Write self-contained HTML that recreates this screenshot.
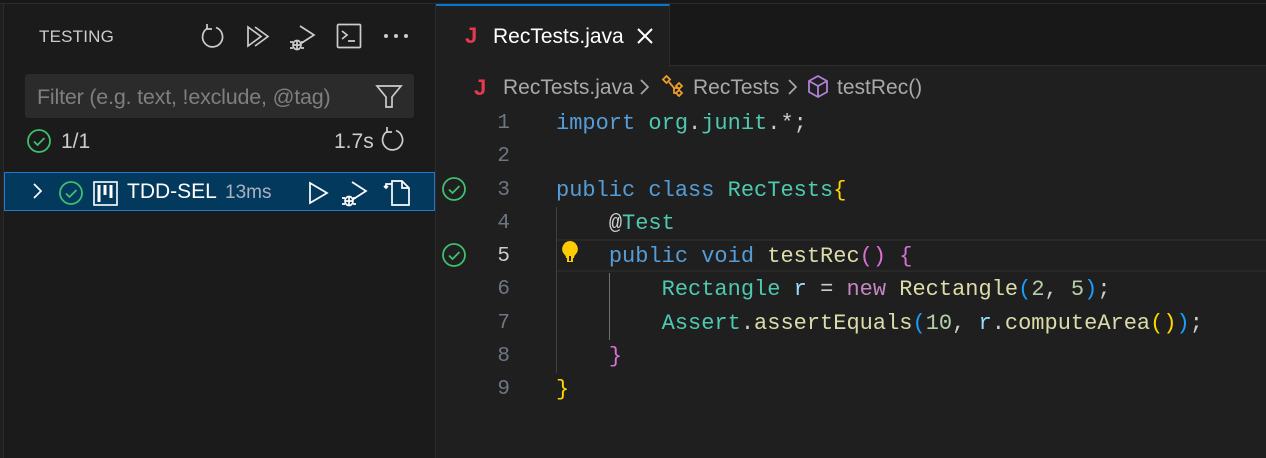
<!DOCTYPE html>
<html><head><meta charset="utf-8"><style>
*{margin:0;padding:0;box-sizing:border-box}
body{width:1266px;height:458px;background:#1f1f1f;position:relative;overflow:hidden;font-family:"Liberation Sans",sans-serif;color:#ccc}
.abs{position:absolute}
#side{left:3px;top:4px;width:433px;height:454px;background:#1b1b1b;border-left:1px solid #2b2b2b;border-right:1px solid #2b2b2b}
#topline{left:0;top:0;width:1266px;height:4px;background:#181818;border-bottom:1px solid #2b2b2b}
.ic{position:absolute;stroke:#ccc;fill:none;stroke-width:1.7}
.code{font-family:"Liberation Mono",monospace;font-size:22px;white-space:pre;position:absolute;left:556px;height:33px;line-height:33px}
.ln{font-family:"Liberation Mono",monospace;font-size:21px;color:#6e7681;position:absolute;left:478px;width:32px;text-align:right;line-height:33px}
.k{color:#569cd6}.t{color:#4ec9b0}.f{color:#dcdcaa}.v{color:#9cdcfe}.n{color:#b5cea8}.g{color:#ffd700}.m{color:#da70d6}.b{color:#179fff}.p{color:#c586c0}.w{color:#ccc}
</style></head><body>
<div class="abs" id="topline"></div>
<div class="abs" id="side"></div>
<div class="abs" style="left:39px;top:27px;font-size:17px;color:#ccc;letter-spacing:0.2px">TESTING</div>
<svg class="ic" style="left:199px;top:23px" width="28" height="28" viewBox="0 0 28 28"><path d="M9 5 A10 10 0 1 0 17 4.5"/><path d="M8 1v5h5"/></svg>
<svg class="ic" style="left:246px;top:24px" width="26" height="26" viewBox="0 0 26 26"><path d="M2 3v19l13-9.5z"/><path d="M9 3l13 9.5L9 22"/></svg>
<svg class="ic" style="left:288px;top:22px" width="30" height="30" viewBox="0 0 30 30"><path d="M12 4l14 9-14 9"/><ellipse cx="9" cy="23" rx="4" ry="4.5"/><path d="M2 20h3M13 20h3M2 26h3M13 26h3M5 23h8M9 19v8"/></svg>
<svg class="ic" style="left:336px;top:23px" width="26" height="26" viewBox="0 0 26 26"><rect x="1.5" y="1.5" width="23" height="23" rx="1"/><path d="M6 8l5 4-5 4M12 18h7"/></svg>
<svg class="abs" style="left:383px;top:32px" width="26" height="8" viewBox="0 0 26 8"><circle cx="3" cy="4" r="2" fill="#ccc"/><circle cx="13" cy="4" r="2" fill="#ccc"/><circle cx="23" cy="4" r="2" fill="#ccc"/></svg>
<div class="abs" style="left:25px;top:74px;width:389px;height:44px;background:#2b2b2b;border-radius:3px"></div>
<div class="abs" style="left:37px;top:85px;font-size:21.5px;color:#7f7f7f;letter-spacing:-0.2px">Filter (e.g. text, !exclude, @tag)</div>
<svg class="ic" style="left:375px;top:84px" width="28" height="26" viewBox="0 0 28 26"><path d="M2 2h24l-9 11v10h-6V13z"/></svg>
<svg class="abs" style="left:26px;top:128px" width="26" height="26" viewBox="0 0 26 26"><circle cx="13" cy="13" r="11" fill="none" stroke="#3fbf6f" stroke-width="1.8"/><path d="M8 13.5l3.5 3.5 7-7" fill="none" stroke="#3fbf6f" stroke-width="1.8"/></svg>
<div class="abs" style="left:61px;top:130px;font-size:21px;color:#ccc">1/1</div>
<div class="abs" style="left:334px;top:130px;font-size:21px;color:#ccc">1.7s</div>
<svg class="ic" style="left:379px;top:126px" width="28" height="28" viewBox="0 0 28 28"><path d="M9 5 A10 10 0 1 0 17 4.5"/><path d="M8 1v5h5"/></svg>
<div class="abs" style="left:4px;top:172px;width:431px;height:39px;background:#04395e;border:1px solid #2479cc"></div>
<svg class="ic" style="left:30px;top:181px;stroke:#fff" width="16" height="20" viewBox="0 0 16 20"><path d="M4 3l7 7-7 7"/></svg>
<svg class="abs" style="left:58px;top:180px" width="26" height="26" viewBox="0 0 26 26"><circle cx="13" cy="13" r="11" fill="none" stroke="#3fbf6f" stroke-width="1.8"/><path d="M8 13.5l3.5 3.5 7-7" fill="none" stroke="#3fbf6f" stroke-width="1.8"/></svg>
<svg class="abs" style="left:93px;top:181px" width="25" height="25" viewBox="0 0 25 25"><rect x="1" y="1" width="23" height="23" fill="none" stroke="#fff" stroke-width="1.6"/><path d="M6 4v17M12 4v10M18 4v13" stroke="#fff" stroke-width="3"/></svg>
<div class="abs" style="left:127px;top:180px;font-size:21px;color:#fff">TDD-SEL</div>
<div class="abs" style="left:225px;top:182px;font-size:19px;color:#a8b3bf">13ms</div>
<svg class="ic" style="left:306px;top:180px;stroke:#fff" width="26" height="26" viewBox="0 0 26 26"><path d="M4 3v20l17-10z"/></svg>
<svg class="ic" style="left:340px;top:178px;stroke:#fff" width="30" height="30" viewBox="0 0 30 30"><path d="M12 4l14 9-14 9"/><ellipse cx="9" cy="23" rx="4" ry="4.5"/><path d="M2 20h3M13 20h3M2 26h3M13 26h3M5 23h8M9 19v8"/></svg>
<svg class="ic" style="left:382px;top:178px;stroke:#fff" width="30" height="30" viewBox="0 0 30 30"><path d="M10 3h10l7 7v17H10z M20 3v7h7"/><path d="M10 6H4v4M2 8l2 2 2-2"/></svg>
<div class="abs" style="left:436px;top:4px;width:830px;height:62px;background:#181818;border-bottom:1px solid #2b2b2b"></div>
<div class="abs" style="left:436px;top:4px;width:234px;height:63px;background:#1f1f1f;border-top:2px solid #0078d4;border-right:1px solid #2b2b2b"></div>
<div class="abs" style="left:465px;top:23px;font-size:22px;font-weight:bold;color:#e8384f">J</div>
<div class="abs" style="left:493px;top:25px;font-size:21px;color:#fff">RecTests.java</div>
<svg class="ic" style="left:636px;top:27px;stroke:#fff;stroke-width:2" width="18" height="18" viewBox="0 0 18 18"><path d="M2 2l14 14M16 2L2 16"/></svg>
<div class="abs" style="left:474px;top:75px;font-size:22px;font-weight:bold;color:#e8384f">J</div>
<div class="abs" style="left:503px;top:76px;font-size:21px;color:#a9a9a9">RecTests.java</div>
<svg class="ic" style="left:638px;top:78px;stroke:#a9a9a9" width="14" height="18" viewBox="0 0 14 18"><path d="M3 2l7 7-7 7"/></svg>
<svg class="abs" style="left:661px;top:75px" width="26" height="22" viewBox="0 0 26 22"><g fill="none" stroke="#ee9d28" stroke-width="1.8"><path d="M3 2l5 0 0 5-5 0z" transform="rotate(45 5.5 4.5)"/><path d="M8 7l5 6h5"/><path d="M18 8l3 3-3 3-3-3z"/><path d="M18 15l3 3-3 3-3-3z"/><path d="M13 13v5h2"/></g></svg>
<div class="abs" style="left:693px;top:76px;font-size:21px;color:#a9a9a9">RecTests</div>
<svg class="ic" style="left:786px;top:78px;stroke:#a9a9a9" width="14" height="18" viewBox="0 0 14 18"><path d="M3 2l7 7-7 7"/></svg>
<svg class="abs" style="left:806px;top:74px" width="24" height="26" viewBox="0 0 24 26"><g fill="none" stroke="#b180d7" stroke-width="1.8"><path d="M12 2l9 5v11l-9 5-9-5V7z"/><path d="M3 7l9 5 9-5M12 12v11"/></g></svg>
<div class="abs" style="left:837px;top:76px;font-size:21px;color:#a9a9a9">testRec()</div>
<div class="abs" style="left:556px;top:239px;width:710px;height:33px;border-top:2px solid #282828;border-bottom:2px solid #282828"></div>
<div class="abs" style="left:556px;top:207px;width:1px;height:166px;background:#404040"></div>
<div class="abs" style="left:609px;top:273px;width:1px;height:67px;background:#707070"></div>
<svg class="abs" style="left:441px;top:176px" width="26" height="26" viewBox="0 0 26 26"><circle cx="13" cy="13" r="11" fill="none" stroke="#3fbf6f" stroke-width="1.8"/><path d="M8 13.5l3.5 3.5 7-7" fill="none" stroke="#3fbf6f" stroke-width="1.8"/></svg>
<svg class="abs" style="left:441px;top:242px" width="26" height="26" viewBox="0 0 26 26"><circle cx="13" cy="13" r="11" fill="none" stroke="#3fbf6f" stroke-width="1.8"/><path d="M8 13.5l3.5 3.5 7-7" fill="none" stroke="#3fbf6f" stroke-width="1.8"/></svg>
<svg class="abs" style="left:560px;top:240px" width="20" height="24" viewBox="0 0 20 24"><path d="M10 1a8 8 0 0 0-6 13c1.5 1.5 2 2.5 2 4h8c0-1.5.5-2.5 2-4a8 8 0 0 0-6-13z" fill="#ffcc00"/><rect x="7" y="18" width="6" height="4" fill="#ffcc00"/><rect x="9" y="16" width="2" height="5" fill="#222"/></svg>
<div class="ln" style="top:107px">1</div>
<div class="ln" style="top:140px">2</div>
<div class="ln" style="top:174px">3</div>
<div class="ln" style="top:207px">4</div>
<div class="ln" style="top:240px;color:#ccc">5</div>
<div class="ln" style="top:273px">6</div>
<div class="ln" style="top:307px">7</div>
<div class="ln" style="top:340px">8</div>
<div class="ln" style="top:373px">9</div>
<div class="code" style="top:107px"><span class="k">import</span> <span class="t">org</span><span class="w">.</span><span class="t">junit</span><span class="w">.*;</span></div>
<div class="code" style="top:174px"><span class="k">public</span> <span class="k">class</span> <span class="t">RecTests</span><span class="g">{</span></div>
<div class="code" style="top:207px">    <span class="w">@</span><span class="t">Test</span></div>
<div class="code" style="top:240px">    <span class="k">public</span> <span class="k">void</span> <span class="f">testRec</span><span class="m">()</span> <span class="m">{</span></div>
<div class="code" style="top:273px">        <span class="t">Rectangle</span> <span class="v">r</span> <span class="w">=</span> <span class="p">new</span> <span class="f">Rectangle</span><span class="b">(</span><span class="n">2</span><span class="w">, </span><span class="n">5</span><span class="b">)</span><span class="w">;</span></div>
<div class="code" style="top:307px">        <span class="t">Assert</span><span class="w">.</span><span class="f">assertEquals</span><span class="b">(</span><span class="n">10</span><span class="w">, </span><span class="v">r</span><span class="w">.</span><span class="f">computeArea</span><span class="g">()</span><span class="b">)</span><span class="w">;</span></div>
<div class="code" style="top:340px">    <span class="m">}</span></div>
<div class="code" style="top:373px"><span class="g">}</span></div>
</body></html>
